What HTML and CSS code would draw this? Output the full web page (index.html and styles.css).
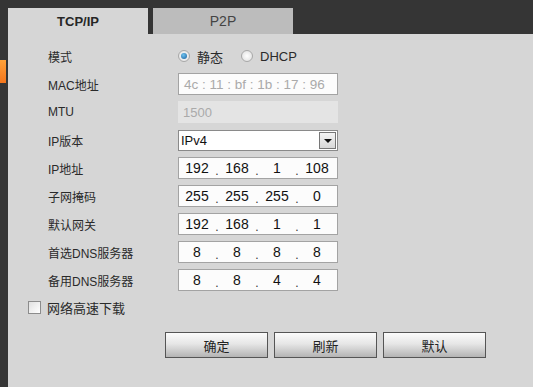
FILE: index.html
```html
<!DOCTYPE html>
<html lang="zh-CN">
<head>
    <meta charset="UTF-8">
    <meta name="viewport" content="width=device-width, initial-scale=1.0">
    <title>TCP/IP</title>
    <link rel="stylesheet" href="styles.css">
</head>
<body>
    <div class="side">
        <div class="side-mark"></div>
    </div>

    <div class="main">
        <div class="tabs">
            <div class="tab active">TCP/IP</div>
            <div class="tab">P2P</div>
        </div>

        <div class="panel">
            <div class="form">
                <div class="row">
                    <div class="label">模式</div>
                    <div class="modes">
                        <label class="radio"><span class="dot checked"></span>静态</label>
                        <label class="radio"><span class="dot"></span>DHCP</label>
                    </div>
                </div>
                <div class="row">
                    <div class="label">MAC地址</div>
                    <div class="field mac">4c : 11 : bf : 1b : 17 : 96</div>
                </div>
                <div class="row">
                    <div class="label">MTU</div>
                    <div class="field disabled">1500</div>
                </div>
                <div class="row">
                    <div class="label">IP版本</div>
                    <div class="field select">
                        <span>IPv4</span>
                        <span class="arrow"></span>
                    </div>
                </div>
                <div class="row">
                    <div class="label">IP地址</div>
                    <div class="field ip">
                        <span class="seg">192</span><span class="sep">.</span><span class="seg">168</span><span class="sep">.</span><span class="seg">1</span><span class="sep">.</span><span class="seg">108</span>
                    </div>
                </div>
                <div class="row">
                    <div class="label">子网掩码</div>
                    <div class="field ip">
                        <span class="seg">255</span><span class="sep">.</span><span class="seg">255</span><span class="sep">.</span><span class="seg">255</span><span class="sep">.</span><span class="seg">0</span>
                    </div>
                </div>
                <div class="row">
                    <div class="label">默认网关</div>
                    <div class="field ip">
                        <span class="seg">192</span><span class="sep">.</span><span class="seg">168</span><span class="sep">.</span><span class="seg">1</span><span class="sep">.</span><span class="seg">1</span>
                    </div>
                </div>
                <div class="row">
                    <div class="label">首选DNS服务器</div>
                    <div class="field ip">
                        <span class="seg">8</span><span class="sep">.</span><span class="seg">8</span><span class="sep">.</span><span class="seg">8</span><span class="sep">.</span><span class="seg">8</span>
                    </div>
                </div>
                <div class="row">
                    <div class="label">备用DNS服务器</div>
                    <div class="field ip">
                        <span class="seg">8</span><span class="sep">.</span><span class="seg">8</span><span class="sep">.</span><span class="seg">4</span><span class="sep">.</span><span class="seg">4</span>
                    </div>
                </div>
            </div>

            <div class="check-row">
                <span class="checkbox"></span>
                <span>网络高速下载</span>
            </div>

            <div class="actions">
                <button>确定</button>
                <button>刷新</button>
                <button>默认</button>
            </div>
        </div>
    </div>
</body>
</html>
```

FILE: styles.css
```css
html, body {
    height: 100%;
}

body {
    margin: 0;
    background-color: #353535;
    font-family: "Liberation Sans", "Noto Sans CJK SC", sans-serif;
    font-size: 12px;
    color: #2a2a2a;
    display: flex;
    overflow: hidden;
}

.side {
    width: 8px;
    flex-shrink: 0;
}

.side-mark {
    width: 6px;
    height: 23px;
    margin-top: 60px;
    background: linear-gradient(#ffa23a, #f5761c);
}

.main {
    flex: 1;
    display: flex;
    flex-direction: column;
    padding-top: 8px;
}

.tabs {
    display: flex;
    gap: 5px;
    height: 26px;
}

.tab {
    width: 140px;
    display: flex;
    align-items: center;
    justify-content: center;
    font-size: 14px;
    color: #444;
    background-color: #bcbcbc;
}

.tab.active {
    background-color: #d6d6d6;
    color: #262626;
    font-weight: bold;
    font-size: 13px;
}

.panel {
    flex: 1;
    background-color: #d6d6d6;
    padding-top: 8px;
}

.form {
    padding-left: 40px;
}

.row {
    display: flex;
    align-items: center;
    height: 28px;
}

.label {
    width: 130px;
    flex-shrink: 0;
}

.modes {
    display: flex;
    gap: 18px;
    font-size: 13px;
}

.radio {
    display: flex;
    align-items: center;
    gap: 7px;
}

.dot {
    width: 10px;
    height: 10px;
    border-radius: 50%;
    border: 1px solid #a8a8a8;
    background: radial-gradient(#ffffff, #dcdcdc);
    display: flex;
    align-items: center;
    justify-content: center;
}

.dot.checked::after {
    content: "";
    width: 6px;
    height: 6px;
    border-radius: 50%;
    background: radial-gradient(circle at 40% 35%, #6fc3f0, #1a5e9c);
}

.field {
    box-sizing: border-box;
    width: 160px;
    height: 22px;
    border: 1px solid #a3a3a3;
    background-color: #fcfcfc;
    display: flex;
    align-items: center;
    font-size: 13px;
}

.field.mac {
    color: #aaa;
    padding-left: 5px;
    font-size: 13.5px;
    white-space: nowrap;
    overflow: hidden;
}

.field.disabled {
    border-color: #e4e4e4;
    background-color: #e4e4e4;
    color: #aaa;
    padding-left: 4px;
}

.field.select {
    height: 21px;
    border-color: #8a8a8a;
    background-color: #fff;
    justify-content: space-between;
    padding-left: 2px;
    padding-right: 1px;
    color: #111;
}

.arrow {
    box-sizing: border-box;
    width: 17px;
    height: 17px;
    border: 1px solid #777;
    background: linear-gradient(#f4f4f4, #d8d8d8);
    display: flex;
    align-items: center;
    justify-content: center;
}

.arrow::after {
    content: "";
    border-left: 4px solid transparent;
    border-right: 4px solid transparent;
    border-top: 4px solid #111;
    margin-top: 1px;
}

.field.ip {
    padding-left: 3px;
    color: #111;
    font-size: 14px;
}

.seg {
    width: 30px;
    text-align: center;
}

.sep {
    width: 10px;
    text-align: center;
    padding-top: 5px;
    font-size: 12px;
    color: #333;
}

.check-row {
    display: flex;
    align-items: center;
    gap: 6px;
    height: 26px;
    padding-left: 20px;
    font-size: 13px;
}

.checkbox {
    box-sizing: border-box;
    width: 13px;
    height: 13px;
    border: 1px solid #8c8c8c;
    background: linear-gradient(135deg, #e0e0e0, #ffffff);
}

.actions {
    display: flex;
    gap: 6px;
    margin-top: 12px;
    padding-left: 157px;
}

button {
    width: 103px;
    height: 26px;
    border: 1px solid #555;
    background: linear-gradient(#fbfbfb, #e6e6e6 45%, #b4b4b4);
    font-family: "Liberation Sans", "Noto Sans CJK SC", sans-serif;
    font-size: 13px;
    color: #222;
    padding: 0;
}
```
